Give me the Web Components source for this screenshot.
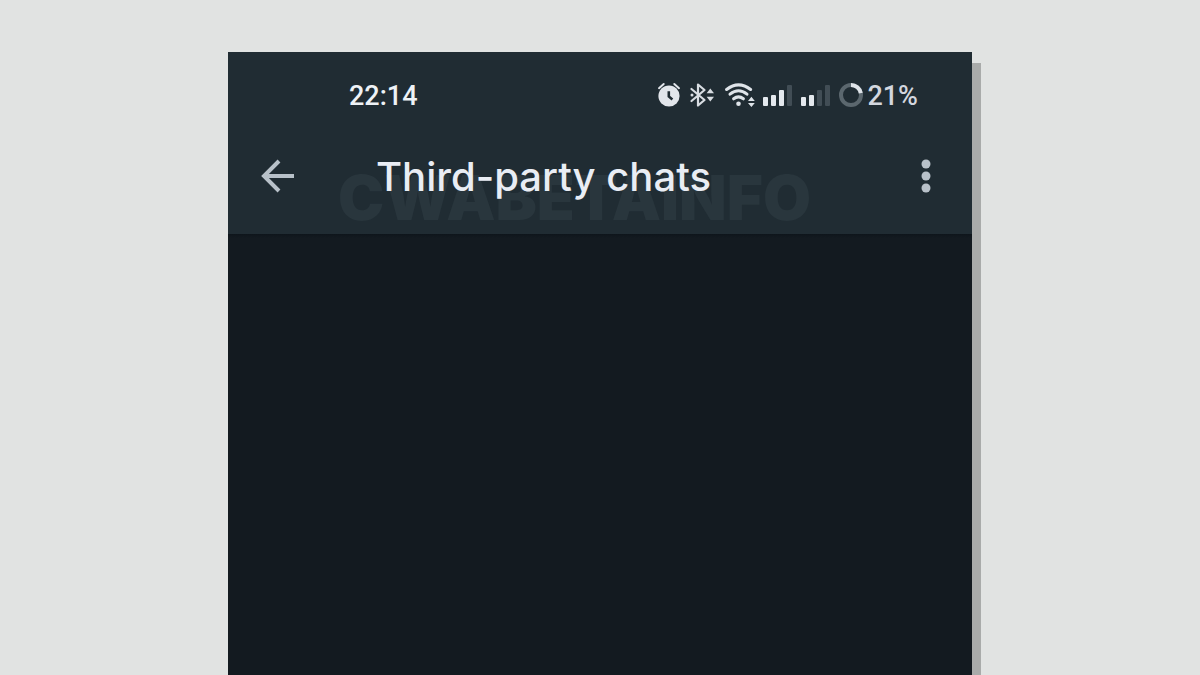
<!DOCTYPE html>
<html lang="en">
<head>
<meta charset="utf-8">
<meta name="viewport" content="width=device-width, initial-scale=1">
<title>Third-party chats</title>
<style>
  body { margin: 0; background: #e1e3e2; font-family: Roboto, "Liberation Sans", sans-serif; }
</style>
</head>
<body>
<phone-screen>
  <status-bar slot="header" time="22:14" battery="21%"></status-bar>
  <app-bar slot="header" watermark="CWABETAINFO">Third-party chats</app-bar>
</phone-screen>

<script>
class ShadowElement extends HTMLElement {
  render(html) {
    const template = document.createElement('template');
    template.innerHTML = html;
    this.attachShadow({ mode: 'open' }).append(template.content.cloneNode(true));
  }
}

customElements.define('phone-screen', class extends ShadowElement {
  connectedCallback() {
    this.render(`
      <style>
        :host { display: flex; justify-content: center; box-sizing: border-box; min-height: 100vh; padding-top: 52px; }
        .screen { width: 62%; display: flex; flex-direction: column; background: #131a20; box-shadow: 9px 11px 0 #a9abaa; }
        header { background: #202c33; }
        main { flex: 1; background: linear-gradient(#0e151b, #131a20 4px); }
      </style>
      <div class="screen">
        <header><slot name="header"></slot></header>
        <main><slot></slot></main>
      </div>`);
  }
});

customElements.define('signal-bars', class extends ShadowElement {
  connectedCallback() {
    const level = Number(this.getAttribute('level'));
    const bars = [[0, 14, 9], [8, 12, 11], [16, 7, 16], [24, 2, 21]];
    this.render(`
      <style>:host { display: block; height: 24px; } svg { display: block; }</style>
      <svg width="30" height="24" viewBox="0 0 30 24" aria-hidden="true">
        ${bars.map(([x, y, h], i) => `<rect x="${x}" y="${y}" width="5" height="${h}" rx="1" fill="${i < level ? '#e4e9ee' : '#414d55'}"/>`).join('')}
      </svg>`);
  }
});

customElements.define('status-bar', class extends ShadowElement {
  connectedCallback() {
    this.render(`
      <style>
        :host { display: flex; align-items: center; justify-content: space-between; height: 86px; padding: 0 54px 0 121px;
          font: 500 27px/32px Roboto, "Liberation Sans", sans-serif; color: #eef2f6; }
        time, span { padding-top: 2px; }
        .icons { display: flex; align-items: center; gap: 8px; }
        .battery { display: flex; align-items: center; gap: 4px; color: #d3d7df; }
        svg { display: block; }
      </style>
      <time>${this.getAttribute('time')}</time>
      <div class="icons">
        <svg width="24" height="26" viewBox="0 0 24 26" aria-hidden="true">
          <circle cx="12" cy="14" r="10.6" fill="#e2e6eb"/>
          <path d="M2 6.200 6.700 2M22 6.200 17.300 2" stroke="#e2e6eb" stroke-width="2" stroke-linecap="round"/>
          <path d="M11.8 9.2v5.2l3.6 3" fill="none" stroke="#202c33" stroke-width="2.6"/>
        </svg>
        <svg width="28" height="24" viewBox="0 0 28 24" aria-hidden="true">
          <path d="M2.500 6 15.500 17l-6.500 5.500V1.500L15.500 7 2.500 18" fill="none" stroke="#d8dde2" stroke-width="2.200" stroke-linejoin="round" stroke-linecap="round"/>
          <path d="M17.600 10.200 21.300 5.500l3.700 4.700zM17.600 13.800H25L21.300 18.500z" fill="#d8dde2"/>
          <circle cx="3" cy="12" r="1.500" fill="#d8dde2"/>
        </svg>
        <svg width="30" height="24" viewBox="0 0 30 24" aria-hidden="true">
          <g fill="none" stroke="#dfe4e9" stroke-width="3" stroke-linecap="round">
            <path d="M1.6 6.5Q13.5-2.8 25.6 6.5"/>
            <path d="M5 11.2q8.5-6.8 17 0"/>
            <path d="M8.6 15.8q4.9-3.8 9.8 0"/>
          </g>
          <circle cx="13.5" cy="20.7" r="2.3" fill="#dfe4e9"/>
          <path d="M23 18 26.400 13.800l3.400 4.200zM23 20h6.800L26.400 24z" fill="#dfe4e9"/>
        </svg>
        <signal-bars level="3"></signal-bars>
        <signal-bars level="2"></signal-bars>
        <div class="battery">
          <svg width="24" height="24" viewBox="0 0 24 24" aria-hidden="true">
            <circle cx="12" cy="12" r="10" fill="none" stroke="#5b676e" stroke-width="4"/>
            <path d="M12 2a10 10 0 0 1 9.800 8.200" fill="none" stroke="#dfe4e9" stroke-width="4"/>
          </svg>
          <span>${this.getAttribute('battery')}</span>
        </div>
      </div>`);
  }
});

customElements.define('app-bar', class extends ShadowElement {
  connectedCallback() {
    this.render(`
      <style>
        :host { display: flex; align-items: center; position: relative; height: 76px; padding: 0 26px 20px 30px; }
        button { display: grid; place-items: center; width: 40px; height: 40px; padding: 0; border: 0; background: none; color: #b8c1c9; }
        svg { display: block; }
        h1 { flex: 1; position: relative; margin: 0 0 0 78px; padding-top: 2px; font: 500 40px/52px Inter, "Liberation Sans", sans-serif; color: #e9edf4; white-space: nowrap; }
        .mark { position: absolute; left: 110px; top: 24px; font: 900 62px/72px Inter, sans-serif; color: #29363d; pointer-events: none; }
      </style>
      <span class="mark">${this.getAttribute('watermark')}</span>
      <button type="button" aria-label="Back">
        <svg width="36" height="36" viewBox="0 0 36 36"><path d="M34 18H4M19 3 4 18l15 15" fill="none" stroke="currentColor" stroke-width="4"/></svg>
      </button>
      <h1><slot></slot></h1>
      <button type="button" aria-label="More options">
        <svg width="12" height="36" viewBox="0 0 24 72" fill="currentColor"><circle cx="12" cy="12" r="9"/><circle cx="12" cy="36" r="9"/><circle cx="12" cy="60" r="9"/></svg>
      </button>`);
  }
});
</script>
</body>
</html>
